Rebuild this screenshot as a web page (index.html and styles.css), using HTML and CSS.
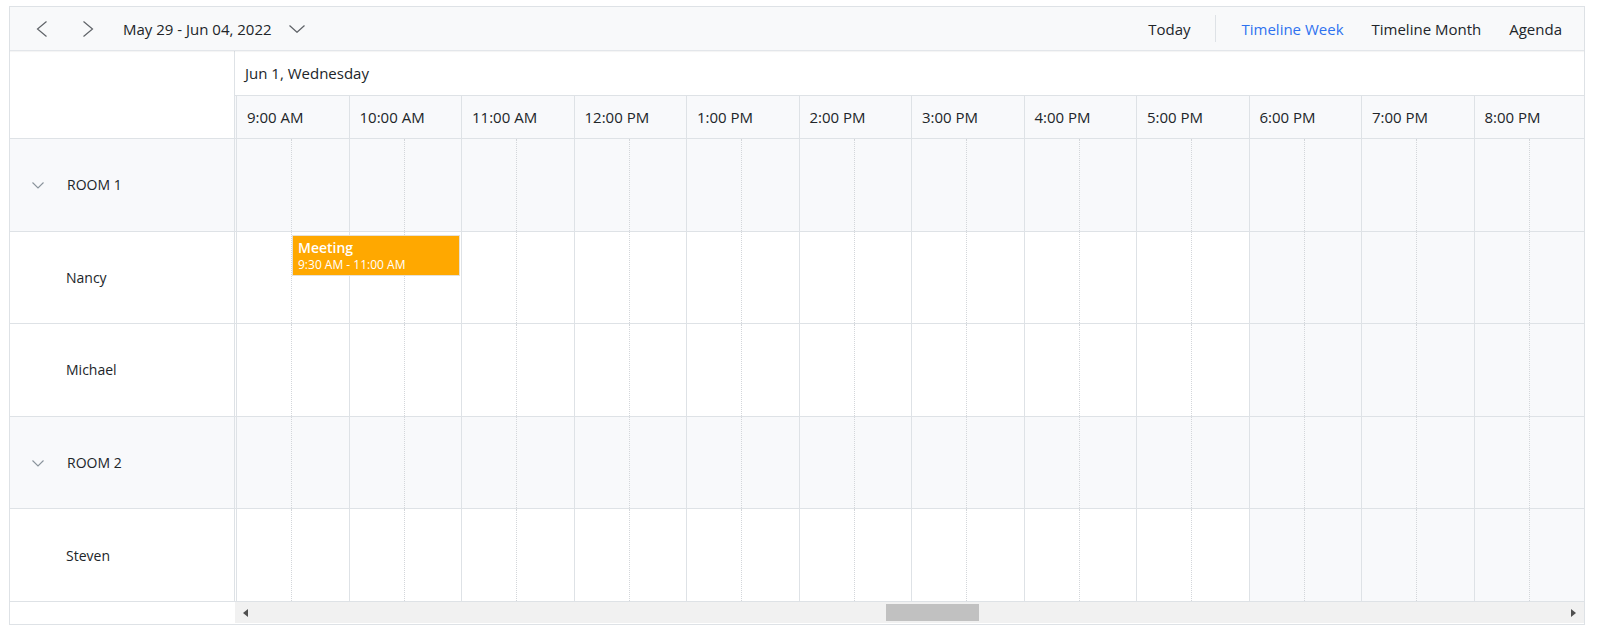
FILE: index.html
```html
<!DOCTYPE html>
<html>
<head>
<meta charset="utf-8">
<title>Scheduler - Timeline Week</title>
<link rel="stylesheet" href="styles.css">
</head>
<body>
<div class="scheduler">
  <div class="toolbar">
    <div class="tb-left">
      <svg class="nav-icon" width="12" height="16" viewBox="0 0 12 16"><polyline points="10.5,0.5 1.5,8 10.5,15.5" fill="none" stroke="#5f6368" stroke-width="1.2"/></svg>
      <svg class="nav-icon next" width="12" height="16" viewBox="0 0 12 16"><polyline points="1.5,0.5 10.5,8 1.5,15.5" fill="none" stroke="#5f6368" stroke-width="1.2"/></svg>
      <span class="date-range">May 29 - Jun 04, 2022</span>
      <svg class="caret" width="16" height="8" viewBox="0 0 16 8"><polyline points="0.5,0.5 8,7.3 15.5,0.5" fill="none" stroke="#5f6368" stroke-width="1.2"/></svg>
    </div>
    <div class="tb-right">
      <span class="tb-item">Today</span>
      <span class="sep"></span>
      <span class="tb-item active">Timeline Week</span>
      <span class="tb-item gap">Timeline Month</span>
      <span class="tb-item gap">Agenda</span>
    </div>
  </div>
  <div class="body">
    <div class="res-col">
      <div class="res-head"></div>
      <div class="res-rows">
        <div class="res-row group"><svg class="grp-caret" width="12" height="7" viewBox="0 0 12 7"><polyline points="0.5,0.5 6,6 11.5,0.5" fill="none" stroke="#8a939c" stroke-width="1.1"/></svg><span>ROOM 1</span></div>
        <div class="res-row child">Nancy</div>
        <div class="res-row child">Michael</div>
        <div class="res-row group"><svg class="grp-caret" width="12" height="7" viewBox="0 0 12 7"><polyline points="0.5,0.5 6,6 11.5,0.5" fill="none" stroke="#8a939c" stroke-width="1.1"/></svg><span>ROOM 2</span></div>
        <div class="res-row child">Steven</div>
      </div>
      <div class="res-foot"></div>
    </div>
    <div class="time-area">
      <div class="date-head">Jun 1, Wednesday</div>
      <div class="time-head">
        <div class="th">9:00 AM</div>
        <div class="th">10:00 AM</div>
        <div class="th">11:00 AM</div>
        <div class="th">12:00 PM</div>
        <div class="th">1:00 PM</div>
        <div class="th">2:00 PM</div>
        <div class="th">3:00 PM</div>
        <div class="th">4:00 PM</div>
        <div class="th">5:00 PM</div>
        <div class="th">6:00 PM</div>
        <div class="th">7:00 PM</div>
        <div class="th">8:00 PM</div>
      </div>
      <div class="grid">
        <div class="grow group">
          <div class="hc"><i></i></div><div class="hc"><i></i></div><div class="hc"><i></i></div><div class="hc"><i></i></div><div class="hc"><i></i></div><div class="hc"><i></i></div><div class="hc"><i></i></div><div class="hc"><i></i></div><div class="hc"><i></i></div><div class="hc"><i></i></div><div class="hc"><i></i></div><div class="hc"><i></i></div>
        </div>
        <div class="grow">
          <div class="hc"><i></i></div><div class="hc"><i></i></div><div class="hc"><i></i></div><div class="hc"><i></i></div><div class="hc"><i></i></div><div class="hc"><i></i></div><div class="hc"><i></i></div><div class="hc"><i></i></div><div class="hc"><i></i></div><div class="hc off"><i></i></div><div class="hc off"><i></i></div><div class="hc off"><i></i></div>
          <div class="event">
            <div class="ev-title">Meeting</div>
            <div class="ev-time">9:30 AM - 11:00 AM</div>
          </div>
        </div>
        <div class="grow">
          <div class="hc"><i></i></div><div class="hc"><i></i></div><div class="hc"><i></i></div><div class="hc"><i></i></div><div class="hc"><i></i></div><div class="hc"><i></i></div><div class="hc"><i></i></div><div class="hc"><i></i></div><div class="hc"><i></i></div><div class="hc off"><i></i></div><div class="hc off"><i></i></div><div class="hc off"><i></i></div>
        </div>
        <div class="grow group">
          <div class="hc"><i></i></div><div class="hc"><i></i></div><div class="hc"><i></i></div><div class="hc"><i></i></div><div class="hc"><i></i></div><div class="hc"><i></i></div><div class="hc"><i></i></div><div class="hc"><i></i></div><div class="hc"><i></i></div><div class="hc"><i></i></div><div class="hc"><i></i></div><div class="hc"><i></i></div>
        </div>
        <div class="grow">
          <div class="hc"><i></i></div><div class="hc"><i></i></div><div class="hc"><i></i></div><div class="hc"><i></i></div><div class="hc"><i></i></div><div class="hc"><i></i></div><div class="hc"><i></i></div><div class="hc"><i></i></div><div class="hc"><i></i></div><div class="hc off"><i></i></div><div class="hc off"><i></i></div><div class="hc off"><i></i></div>
        </div>
      </div>
      <div class="hscroll">
        <div class="track">
          <span class="arrow left"></span>
          <span class="thumb"></span>
          <span class="arrow right"></span>
        </div>
      </div>
    </div>
  </div>
</div>
</body>
</html>
```

FILE: styles.css
```css
* { box-sizing: border-box; }

html, body {
  margin: 0;
  padding: 0;
  background: #ffffff;
}

body {
  padding: 6px 0 0 9px;
  font-family: "Open Sans", "Noto Sans", "Liberation Sans", sans-serif;
  color: #212529;
}

.scheduler {
  width: 1576px;
  height: 619px;
  border: 1px solid #dee2e6;
  display: flex;
  flex-direction: column;
  background: #ffffff;
}

/* Toolbar */
.toolbar {
  height: 44px;
  flex: 0 0 44px;
  background: #f8f9fa;
  border-bottom: 1px solid #e3e6ea;
  box-shadow: 0 1px 1px rgba(0, 0, 0, 0.04);
  display: flex;
  align-items: center;
  justify-content: space-between;
  font-size: 15px;
  position: relative;
  z-index: 1;
}

.tb-left {
  display: flex;
  align-items: center;
  padding-left: 26px;
}

.nav-icon { display: block; }
.nav-icon.next { margin-left: 34px; }

.date-range {
  margin-left: 29px;
  color: #212529;
  line-height: 20px;
}

.caret {
  display: block;
  margin-left: 17px;
  margin-top: 1px;
}

.tb-right {
  display: flex;
  align-items: center;
  padding-right: 22px;
}

.tb-item {
  line-height: 20px;
  color: #212529;
  white-space: nowrap;
}

.tb-item.active { color: #2f72ef; }
.tb-item.gap { margin-left: 28px; }

.sep {
  width: 1px;
  height: 27px;
  background: #dee2e6;
  margin: 0 25px;
}

/* Body */
.body {
  flex: 1 1 auto;
  display: flex;
  min-height: 0;
}

.res-col {
  width: 225px;
  flex: 0 0 225px;
  display: flex;
  flex-direction: column;
}

.res-head {
  height: 88px;
  flex: 0 0 88px;
  border-right: 1px solid #dee2e6;
  border-bottom: 1px solid #dee2e6;
}

.res-rows {
  height: 463px;
  flex: 0 0 463px;
  display: flex;
  flex-direction: column;
  border-right: 1px solid #dee2e6;
}

.res-row {
  flex: 1 1 0;
  border-bottom: 1px solid #dee2e6;
  display: flex;
  align-items: center;
  font-size: 14px;
}

.res-row.group {
  background: #f8f9fb;
  padding-left: 22px;
}

.grp-caret {
  display: block;
  margin-right: 23px;
  margin-top: 2px;
}

.res-row.child { padding-left: 56px; }

.res-foot {
  height: 22px;
  flex: 0 0 22px;
}

/* Time area */
.time-area {
  flex: 1 1 auto;
  min-width: 0;
  overflow: hidden;
  display: flex;
  flex-direction: column;
}

.date-head {
  height: 45px;
  flex: 0 0 45px;
  border-bottom: 1px solid #dee2e6;
  font-size: 15px;
  padding-left: 10px;
  display: flex;
  align-items: center;
  white-space: nowrap;
}

.time-head {
  height: 43px;
  flex: 0 0 43px;
  display: flex;
  padding-left: 1px;
  border-bottom: 1px solid #dee2e6;
  background: #f8f9fb;
}

.th {
  width: 112.5px;
  flex: 0 0 112.5px;
  border-left: 1px solid #dee2e6;
  padding-left: 10px;
  display: flex;
  align-items: center;
  font-size: 15px;
  white-space: nowrap;
}

.grid {
  height: 463px;
  flex: 0 0 463px;
  display: flex;
  flex-direction: column;
}

.grow {
  flex: 1 1 0;
  display: flex;
  padding-left: 1px;
  border-bottom: 1px solid #dee2e6;
  position: relative;
}

.grow.group { background: #f8f9fb; }

.hc {
  width: 112.5px;
  flex: 0 0 112.5px;
  border-left: 1px solid #dee2e6;
  display: flex;
}

.hc.off { background: #f8f9fb; }

.hc i {
  display: block;
  width: 55px;
  flex: 0 0 55px;
  border-right: 1px dotted #d3d6da;
}

.event {
  position: absolute;
  left: 57px;
  top: 3px;
  width: 168px;
  height: 41px;
  background: #ffa800;
  border: 1px solid #e6e1d6;
  color: #ffffff;
  padding: 2px 5px 0 5px;
  white-space: nowrap;
}

.ev-title {
  font-size: 14px;
  font-weight: 600;
  line-height: 19px;
}

.ev-time {
  font-size: 12px;
  line-height: 16px;
}

/* Scrollbar */
.hscroll {
  height: 22px;
  flex: 0 0 22px;
}

.track {
  height: 21px;
  background: #f1f1f1;
  position: relative;
  display: flex;
  align-items: center;
  justify-content: space-between;
  padding: 0 8px 0 8px;
}

.arrow {
  width: 0;
  height: 0;
  border-top: 4.5px solid transparent;
  border-bottom: 4.5px solid transparent;
}

.arrow.left { border-right: 5px solid #505050; }
.arrow.right { border-left: 5px solid #505050; }

.thumb {
  position: absolute;
  left: 651px;
  top: 2px;
  width: 93px;
  height: 17px;
  background: #c1c1c1;
}
```
